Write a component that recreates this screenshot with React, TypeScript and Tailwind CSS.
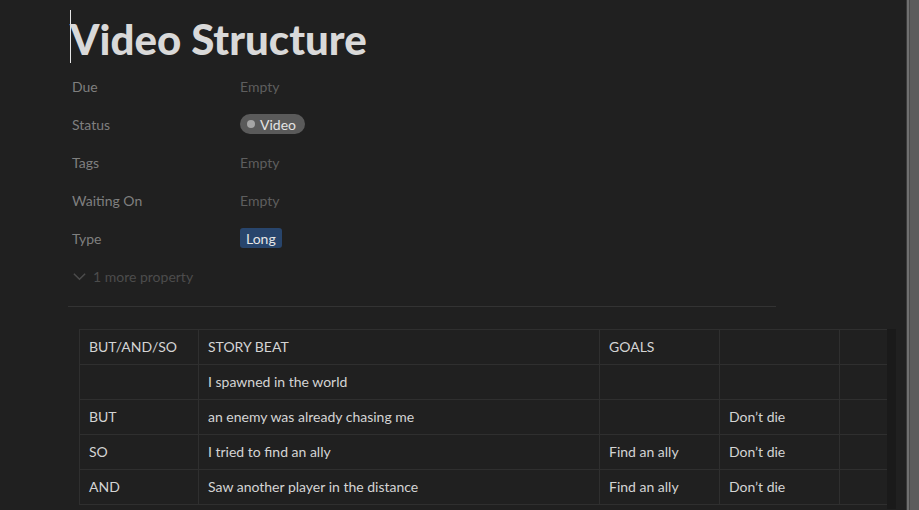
const rows = [
  ["BUT/AND/SO", "STORY BEAT", "GOALS", "", ""],
  ["", "I spawned in the world", "", "", ""],
  ["BUT", "an enemy was already chasing me", "", "Don’t die", ""],
  ["SO", "I tried to find an ally", "Find an ally", "Don’t die", ""],
  ["AND", "Saw another player in the distance", "Find an ally", "Don’t die", ""],
];

const colWidths = ["w-[119px]", "w-[401px]", "w-[120px]", "w-[120px]", "w-[120px]"];

function PropertyRow({ label, children }: { label: string; children: React.ReactNode }) {
  return (
    <div className="flex h-[38px] items-center">
      <div className="w-[168px] text-[14px] text-[#7f7f7f]">{label}</div>
      <div className="flex items-center text-[14px]">{children}</div>
    </div>
  );
}

function Empty() {
  return <span className="text-[#5e5e5e]">Empty</span>;
}

export default function App() {
  return (
    <div
      className="flex h-[510px] w-[919px] overflow-hidden bg-[#202020]"
      style={{ fontFamily: "Lato, 'Noto Sans', sans-serif" }}
    >
      <div className="flex-1 overflow-hidden">
        {/* Title */}
        <div className="flex h-[67px] items-start pl-[70px] pt-[10px]">
          <div className="h-[53px] w-px bg-[#e6e6e6]" />
          <h1 className="-mt-px -ml-px text-[42px] leading-[60px] font-black text-[#d9d9d9]">
            Video Structure
          </h1>
        </div>

        {/* Properties */}
        <div className="pl-[72px]">
          <PropertyRow label="Due">
            <Empty />
          </PropertyRow>
          <PropertyRow label="Status">
            <span className="flex h-[20px] items-center gap-[5px] rounded-full bg-[#5a5a5a] pr-[9px] pl-[7px] text-[#e3e3e3]">
              <span className="h-[8px] w-[8px] rounded-full bg-[#a5a5a5]" />
              Video
            </span>
          </PropertyRow>
          <PropertyRow label="Tags">
            <Empty />
          </PropertyRow>
          <PropertyRow label="Waiting On">
            <Empty />
          </PropertyRow>
          <PropertyRow label="Type">
            <span className="flex h-[20px] items-center rounded-[3px] bg-[#28456c] px-[6px] text-[#e6e6e6]">
              Long
            </span>
          </PropertyRow>
          <div className="flex h-[38px] items-center gap-[6px] text-[14px] text-[#4c4c4c]">
            <svg width="15" height="15" viewBox="0 0 16 16" fill="none" stroke="#4c4c4c" strokeWidth="1.6">
              <path d="M2 5l6 6 6-6" />
            </svg>
            1 more property
          </div>
        </div>

        {/* Divider */}
        <div className="mt-[11px] ml-[68px] h-px w-[708px] bg-[#333333]" />

        {/* Table */}
        <div className="mt-[22px] ml-[79px] flex">
          <div className="w-[808px] overflow-hidden">
            <div className="w-[980px] border-t border-l border-[#2f2f2f]">
              {rows.map((row, r) => (
                <div key={r} className="flex h-[35px] border-b border-[#2f2f2f]">
                  {row.map((cell, c) => (
                    <div
                      key={c}
                      className={`${colWidths[c]} flex shrink-0 items-center border-r border-[#2f2f2f] px-[9px] pb-[2px] text-[14px] text-[#d4d4d4]`}
                    >
                      {cell}
                    </div>
                  ))}
                </div>
              ))}
            </div>
          </div>
          <div className="h-[180px] w-[9px] bg-[#1a1a1a]" />
        </div>
      </div>

      {/* Scrollbar */}
      <div className="flex h-full w-[13px] border-l border-[#3a3a3a]">
        <div className="w-[2px] bg-[#707070]" />
        <div className="w-px bg-[#4a4a4a]" />
        <div className="flex-1 bg-[#5c5c5c]" />
      </div>
    </div>
  );
}
